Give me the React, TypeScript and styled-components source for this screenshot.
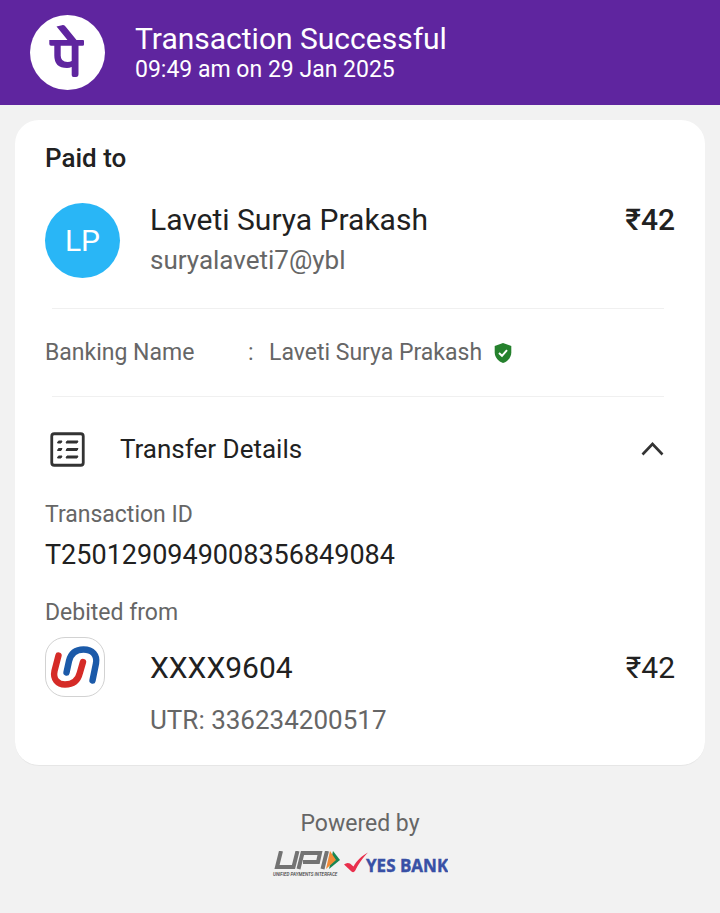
import React, { useState } from "react";
import styled, { createGlobalStyle } from "styled-components";

const GlobalStyle = createGlobalStyle`
  *, *::before, *::after { box-sizing: border-box; }
  body {
    margin: 0;
    background: #f2f2f2;
    color: #212121;
    font-family: Roboto, "Noto Sans", sans-serif;
  }
  h1, h2, p, dl, dt, dd { margin: 0; font-weight: 400; }
  svg { display: block; flex-shrink: 0; }
`;

const Header = styled.header`
  display: flex;
  align-items: center;
  gap: 30px;
  padding: 15px 30px;
  background: #5f259f;
  color: #ffffff;
`;

const HeaderTitle = styled.h1`
  font-size: 30px;
  line-height: 34px;
`;

const HeaderTime = styled.p`
  font-size: 23px;
  line-height: 28px;
`;

const Card = styled.main`
  margin: 15px;
  padding: 20px 30px 26px;
  background: #ffffff;
  border-bottom: 1px solid #e6e6e6;
  border-radius: 24px;
`;

const CardTitle = styled.h2`
  font-size: 26px;
  line-height: 36px;
  font-weight: 500;
`;

const PartyRow = styled.section`
  display: flex;
  align-items: center;
  gap: 30px;
  margin-top: 24px;
  padding-bottom: 28px;
`;

const Avatar = styled.div`
  display: flex;
  align-items: center;
  justify-content: center;
  width: 75px;
  height: 75px;
  border-radius: 50%;
  background: #29b6f6;
  color: #ffffff;
  font-size: 30px;
`;

const PartyText = styled.div`
  flex: 1;
`;

const Name = styled.p`
  font-size: 30px;
  line-height: 40px;
`;

const Handle = styled.p`
  font-size: 26px;
  line-height: 40px;
  color: #666666;
`;

const Amount = styled.p<{ $strong?: boolean }>`
  align-self: flex-start;
  font-size: 30px;
  line-height: 40px;
  font-weight: ${(p) => (p.$strong ? 500 : 400)};
`;

const Divider = styled.hr`
  margin: 0 11px 0 7px;
  border: 0;
  border-top: 1px solid #f0f0f0;
`;

const BankingRow = styled.dl`
  display: flex;
  align-items: center;
  padding: 25px 0;
  font-size: 23px;
  line-height: 37px;
  color: #666666;
`;

const BankingLabel = styled.dt`
  width: 203px;
`;

const BankingValue = styled.dd`
  display: flex;
  align-items: center;
`;

const Colon = styled.span`
  width: 21px;
`;

const Verified = styled.span`
  padding-left: 12px;
`;

const DetailsToggle = styled.button`
  display: flex;
  align-items: center;
  width: 100%;
  margin-top: 33px;
  padding: 0 11px 0 5px;
  border: 0;
  background: transparent;
  color: inherit;
  font: inherit;
  font-size: 26px;
  line-height: 38px;
  text-align: left;
  cursor: pointer;
`;

const ToggleText = styled.span`
  flex: 1;
  padding-left: 35px;
`;

const FieldLabel = styled.p`
  font-size: 23px;
  line-height: 32px;
  color: #666666;
`;

const TransactionId = styled.p`
  margin: 8px 0 26px;
  font-size: 27px;
  line-height: 32px;
`;

const Details = styled.section`
  padding-top: 31px;
`;

const DebitRow = styled.div`
  display: flex;
  gap: 45px;
  margin-top: 8px;
`;

const BankIcon = styled.div`
  display: flex;
  align-items: center;
  justify-content: center;
  width: 60px;
  height: 60px;
  border: 1px solid #d2d2d2;
  border-radius: 20px;
`;

const DebitText = styled.div`
  flex: 1;
`;

const Account = styled.p`
  font-size: 30px;
  line-height: 62px;
`;

const DebitAmount = styled(Amount)`
  line-height: 62px;
`;

const Utr = styled.p`
  margin-top: 3px;
  font-size: 26px;
  line-height: 36px;
  padding-bottom: 1px;
  color: #666666;
`;

const Footer = styled.footer`
  display: flex;
  flex-direction: column;
  align-items: center;
  gap: 11px;
  margin-top: 42px;
  padding-bottom: 30px;
  color: #666666;
  font-size: 23px;
  line-height: 32px;
`;

const Partners = styled.div`
  display: flex;
  align-items: center;
`;

const PhonePeLogo = () => (
  <svg width="75" height="75" viewBox="0 0 75 75" role="img" aria-label="PhonePe">
    <circle cx="37.5" cy="37.5" r="37.5" fill="#fff" />
    <g fill="#5f259f">
      <path d="M26.500 11.500L32 10.200Q34 9.800 35.500 11.500L46.500 25H53Q54 25 54 26V29.500Q54 30.700 52.500 30.700H48.500V59Q48.500 62 46 62H43.500Q41.700 62 41.700 60V52Q39.500 53 37 53Q24.300 53 24.300 40.500V30.700H21Q19.300 30.700 19.300 29V25H37.500Z" />
      <path d="M30.700 30.700H41.700V46Q40 47 37.500 47Q30.700 47 30.700 40.500Z" fill="#fff" />
    </g>
  </svg>
);

const VerifiedShield = () => (
  <svg width="18" height="20" viewBox="0 0 18 20" role="img" aria-label="Verified">
    <path d="M9 0L17.300 3V9.500C17.300 14.500 13.500 18.500 9 20C4.500 18.500.7 14.500.7 9.500V3Z" fill="#25812d" />
    <path d="M5 10L8 12.800L13 7.200" fill="none" stroke="#fff" strokeWidth="2" />
  </svg>
);

const ListIcon = () => (
  <svg width="35" height="35" viewBox="0 0 35 35" fill="none" stroke="#333" aria-hidden="true">
    <rect x="1.750" y="1.750" width="31.500" height="31.500" rx="2.500" strokeWidth="2.800" />
    <path d="M7.500 11L8.500 9H12L11 11ZM16 11L17 9H28L27 11ZM7.500 18.500L8.500 16.500H12L11 18.500ZM16 18.500L17 16.500H28L27 18.500ZM7.500 26L8.500 24H12L11 26ZM16 26L17 24H28L27 26Z" fill="#333" strokeWidth="1" />
  </svg>
);

const Chevron = ({ open }: { open: boolean }) => (
  <svg width="23" height="14" viewBox="0 0 23 14" fill="none" stroke="#333" strokeWidth="2.600" aria-hidden="true">
    <path d={open ? "M1.500 12.500L11.500 2L21.500 12.500" : "M1.500 2L11.500 12.500L21.500 2"} />
  </svg>
);

const UnionBankLogo = () => (
  <svg width="58" height="58" viewBox="0 0 58 58" fill="none" strokeWidth="6.400" strokeLinecap="round" role="img" aria-label="Union Bank of India">
    <path d="M20.500 34.500L23 23C24.800 15.500 30 11.500 37.500 11.500C46.500 11.500 51.500 17 50 25.500L46.500 42.500" stroke="#1b5aa9" />
    <path d="M12.500 17.500L8.500 33C6.800 41 11.500 46.500 19 46.500C27 46.500 32 42.500 33.800 35L37 24" stroke="#d52b27" />
  </svg>
);

const UpiLogo = () => (
  <svg width="72" height="28" viewBox="0 0 72 28" role="img" aria-label="UPI, Unified Payments Interface">
    <g fill="none" stroke="#737373" strokeWidth="4">
      <path d="M9 0L5 16H21.500L25.500 0" />
      <path d="M26.500 18L30.500 2H48L46 11H31" />
      <path d="M55 0L50.500 18" />
    </g>
    <path d="M61 0L68 9L57 18Z" fill="#188653" />
    <path d="M58 0L64 9L54 18Z" fill="#f28a35" />
    <text x="1" y="25" fontFamily="Roboto, sans-serif" fontSize="4.600" fontStyle="italic" fontWeight="500" fill="#444">UNIFIED PAYMENTS INTERFACE</text>
  </svg>
);

const YesBankLogo = () => (
  <svg width="104" height="28" viewBox="0 0 104 28" role="img" aria-label="YES BANK">
    <path d="M0 13.500Q3 11 6 12.500L9.500 15.500C13 9.500 17 5.500 24 1.500C18 7.500 14.500 13 11 20Q9.500 22 7.500 20.500Z" fill="#e92f4c" />
    <text x="22" y="21" fontFamily="'Open Sans', sans-serif" fontSize="17" fontWeight="700" fill="#3850a5" stroke="#3850a5" strokeWidth=".4">YES BANK</text>
  </svg>
);

export default function App() {
  const [open, setOpen] = useState(true);
  return (
    <>
      <GlobalStyle />
      <Header>
        <PhonePeLogo />
        <div>
          <HeaderTitle>Transaction Successful</HeaderTitle>
          <HeaderTime>09:49 am on 29 Jan 2025</HeaderTime>
        </div>
      </Header>
      <Card>
        <CardTitle>Paid to</CardTitle>
        <PartyRow>
          <Avatar>LP</Avatar>
          <PartyText>
            <Name>Laveti Surya Prakash</Name>
            <Handle>suryalaveti7@ybl</Handle>
          </PartyText>
          <Amount $strong>₹42</Amount>
        </PartyRow>
        <Divider />
        <BankingRow>
          <BankingLabel>Banking Name</BankingLabel>
          <BankingValue>
            <Colon>:</Colon>
            Laveti Surya Prakash
            <Verified>
              <VerifiedShield />
            </Verified>
          </BankingValue>
        </BankingRow>
        <Divider />
        <DetailsToggle type="button" aria-expanded={open} onClick={() => setOpen(!open)}>
          <ListIcon />
          <ToggleText>Transfer Details</ToggleText>
          <Chevron open={open} />
        </DetailsToggle>
        {open && (
          <Details>
            <FieldLabel>Transaction ID</FieldLabel>
            <TransactionId>T2501290949008356849084</TransactionId>
            <FieldLabel>Debited from</FieldLabel>
            <DebitRow>
              <BankIcon>
                <UnionBankLogo />
              </BankIcon>
              <DebitText>
                <Account>XXXX9604</Account>
                <Utr>UTR: 336234200517</Utr>
              </DebitText>
              <DebitAmount>₹42</DebitAmount>
            </DebitRow>
          </Details>
        )}
      </Card>
      <Footer>
        <p>Powered by</p>
        <Partners>
          <UpiLogo />
          <YesBankLogo />
        </Partners>
      </Footer>
    </>
  );
}
